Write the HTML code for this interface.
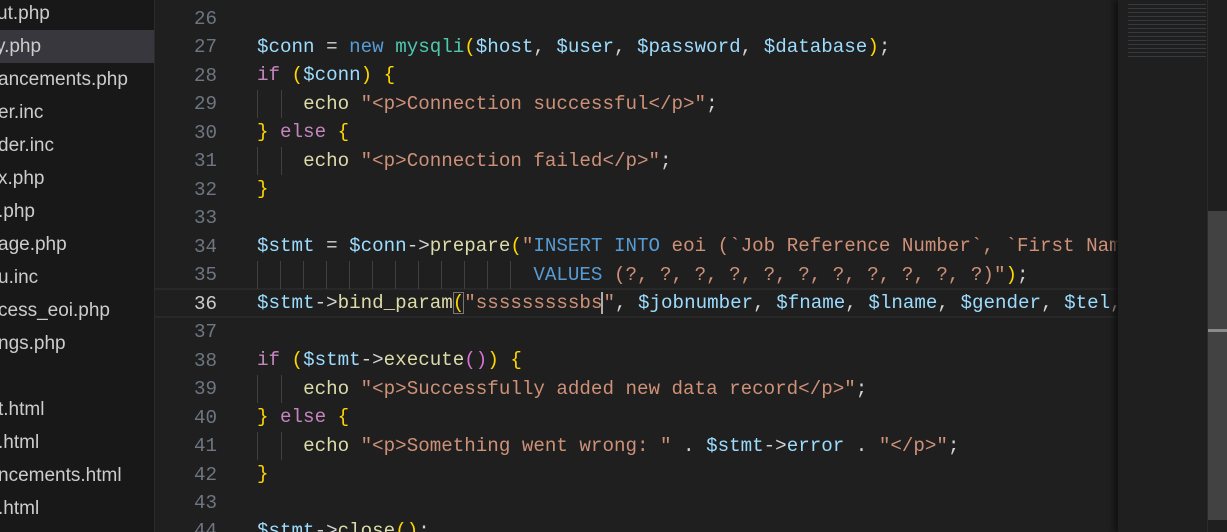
<!DOCTYPE html>
<html><head><meta charset="utf-8"><style>
html,body{margin:0;width:1227px;height:532px;overflow:hidden}
body{background:#1f1f1f;position:relative;font-family:"Liberation Sans",sans-serif}
#side{position:absolute;left:0;top:0;width:154px;height:532px;background:#181818;border-right:1px solid #2b2b2b;overflow:hidden}
.f{position:absolute;left:0;height:33px;line-height:33px;font-size:19px;color:#cccccc;white-space:nowrap;width:154px}
.sel{background:#37373d}
.ln{position:absolute;width:217px;left:0;text-align:right;font-family:"Liberation Mono",monospace;font-size:19.2px;color:#6e7681;line-height:28.47px}
.c{position:absolute;left:257px;font-family:"Liberation Mono",monospace;font-size:19.2px;line-height:28.47px;white-space:pre;color:#d4d4d4}
.v{color:#9cdcfe}.k{color:#569cd6}.t{color:#4ec9b0}.p{color:#c586c0}.fn{color:#dcdcaa}.s{color:#ce9178}.y{color:#ffd700}.m{color:#da70d6}
.g{position:absolute;width:1px;background:#404040}
</style></head><body>
<div id="side">
<div class="f" style="top:-3px;left:-3px">ut.php</div>
<div class="f sel" style="top:30px"><span style="margin-left:-4px">y.php</span></div>
<div class="f" style="top:63px;left:-2px">ancements.php</div>
<div class="f" style="top:96px;left:-2px">er.inc</div>
<div class="f" style="top:129px;left:-2px">der.inc</div>
<div class="f" style="top:162px;left:-2px">x.php</div>
<div class="f" style="top:195px;left:-2px">.php</div>
<div class="f" style="top:228px;left:-2px">age.php</div>
<div class="f" style="top:261px;left:-2px">u.inc</div>
<div class="f" style="top:294px;left:-2px">cess_eoi.php</div>
<div class="f" style="top:327px;left:-2px">ngs.php</div>
<div class="f" style="top:393px;left:-2px">t.html</div>
<div class="f" style="top:426px;left:-2px">.html</div>
<div class="f" style="top:459px;left:-2px">ncements.html</div>
<div class="f" style="top:492px;left:-2px">.html</div>
</div>

<div style="position:absolute;left:155px;top:288px;width:963px;height:26px;border-top:2px solid #282828;border-bottom:2px solid #282828"></div>

<div class="ln" style="top:5px">26<br>27<br>28<br>29<br>30<br>31<br>32<br>33<br>34<br>35<br><span style="color:#cccccc">36</span><br>37<br>38<br>39<br>40<br>41<br>42<br>43<br>44</div>

<div class="g" style="left:257px;top:90px;height:28px"></div><div class="g" style="left:281px;top:90px;height:28px"></div>
<div class="g" style="left:257px;top:147px;height:28px"></div><div class="g" style="left:281px;top:147px;height:28px"></div>
<div class="g" style="left:257px;top:375px;height:28px"></div><div class="g" style="left:281px;top:375px;height:28px"></div>
<div class="g" style="left:257px;top:432px;height:28px"></div><div class="g" style="left:281px;top:432px;height:28px"></div>
<div class="g" style="left:257px;top:261px;height:28px"></div><div class="g" style="left:280px;top:261px;height:28px"></div><div class="g" style="left:303px;top:261px;height:28px"></div><div class="g" style="left:326px;top:261px;height:28px"></div><div class="g" style="left:349px;top:261px;height:28px"></div><div class="g" style="left:372px;top:261px;height:28px"></div><div class="g" style="left:395px;top:261px;height:28px"></div><div class="g" style="left:418px;top:261px;height:28px"></div><div class="g" style="left:441px;top:261px;height:28px"></div><div class="g" style="left:464px;top:261px;height:28px"></div><div class="g" style="left:487px;top:261px;height:28px"></div><div class="g" style="left:510px;top:261px;height:28px"></div>

<div class="c" style="top:33px"><span class="v">$conn</span> = <span class="k">new</span> <span class="t">mysqli</span><span class="y">(</span><span class="v">$host</span>, <span class="v">$user</span>, <span class="v">$password</span>, <span class="v">$database</span><span class="y">)</span>;
<span class="p">if</span> <span class="y">(</span><span class="v">$conn</span><span class="y">)</span> <span class="y">{</span>
    <span class="fn">echo</span> <span class="s">"&lt;p&gt;Connection successful&lt;/p&gt;"</span>;
<span class="y">}</span> <span class="p">else</span> <span class="y">{</span>
    <span class="fn">echo</span> <span class="s">"&lt;p&gt;Connection failed&lt;/p&gt;"</span>;
<span class="y">}</span>

<span class="v">$stmt</span> = <span class="v">$conn</span>-&gt;<span class="fn">prepare</span><span class="y">(</span><span class="s">"</span><span class="k">INSERT INTO</span><span class="s"> eoi (`Job Reference Number`, `First Nam</span>
                        <span class="k">VALUES</span><span class="s"> (?, ?, ?, ?, ?, ?, ?, ?, ?, ?, ?)"</span><span class="y">)</span>;
<span class="v">$stmt</span>-&gt;<span class="fn">bind_param</span><span class="y" style="outline:1px solid #777;outline-offset:-1px">(</span><span class="s">"sssssssssbs</span><span style="border-left:2px solid #aeafad;margin-left:-1px"></span><span class="s">"</span>, <span class="v">$jobnumber</span>, <span class="v">$fname</span>, <span class="v">$lname</span>, <span class="v">$gender</span>, <span class="v">$tel</span>,

<span class="p">if</span> <span class="y">(</span><span class="v">$stmt</span>-&gt;<span class="fn">execute</span><span class="m">()</span><span class="y">)</span> <span class="y">{</span>
    <span class="fn">echo</span> <span class="s">"&lt;p&gt;Successfully added new data record&lt;/p&gt;"</span>;
<span class="y">}</span> <span class="p">else</span> <span class="y">{</span>
    <span class="fn">echo</span> <span class="s">"&lt;p&gt;Something went wrong: "</span> . <span class="v">$stmt</span>-&gt;<span class="v">error</span> . <span class="s">"&lt;/p&gt;"</span>;
<span class="y">}</span>

<span class="v">$stmt</span>-&gt;<span class="fn">close</span><span class="y">()</span>;</div>

<div style="position:absolute;left:1118px;top:0;width:89px;height:532px;background:#1f1f1f;box-shadow:-4px 0 6px #111"></div>
<div style="position:absolute;left:1128px;top:2px;width:78px;height:58px;opacity:.25;background:repeating-linear-gradient(#1f1f1f 0 2px,#7a8a99 2px 3px,#1f1f1f 3px 4px)"></div>
<div style="position:absolute;left:1207px;top:0;width:20px;height:532px;background:#1f1f1f;border-left:1px solid #2b2b2b"></div>
<div style="position:absolute;left:1208px;top:211px;width:19px;height:309px;background:#424242"></div>
<div style="position:absolute;left:1208px;top:329px;width:19px;height:3px;background:#8a8a8a"></div>
</body></html>
